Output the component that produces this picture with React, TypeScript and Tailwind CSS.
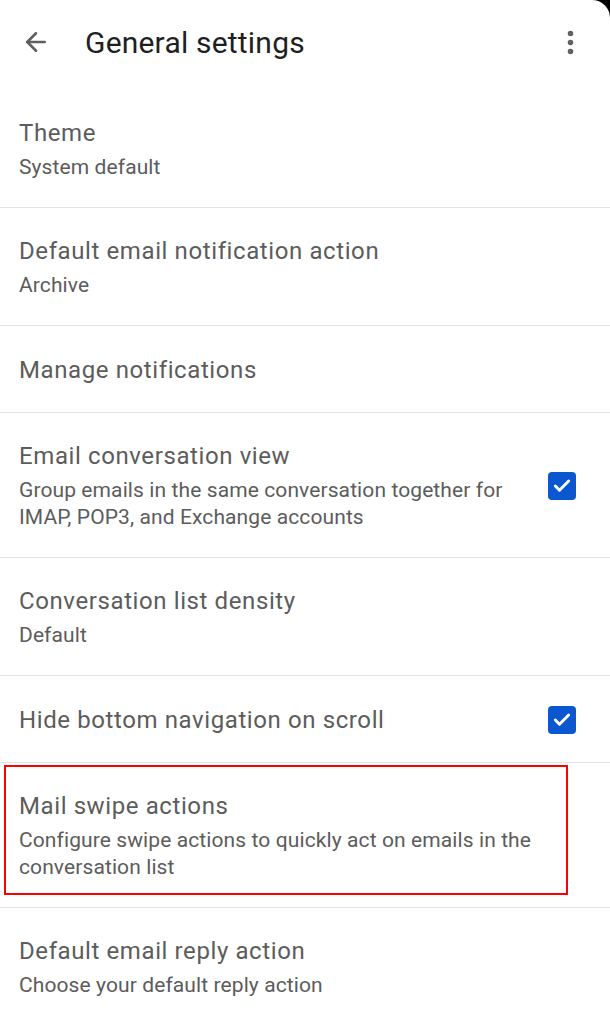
import { ArrowLeft, EllipsisVertical, Check } from 'lucide-react'

interface SettingRow {
  title: string
  lines?: string[]
  checked?: boolean
  highlight?: boolean
}

const ROWS: SettingRow[] = [
  { title: 'Theme', lines: ['System default'] },
  { title: 'Default email notification action', lines: ['Archive'] },
  { title: 'Manage notifications' },
  {
    title: 'Email conversation view',
    lines: ['Group emails in the same conversation together for', 'IMAP, POP3, and Exchange accounts'],
    checked: true,
  },
  { title: 'Conversation list density', lines: ['Default'] },
  { title: 'Hide bottom navigation on scroll', checked: true },
  {
    title: 'Mail swipe actions',
    lines: ['Configure swipe actions to quickly act on emails in the', 'conversation list'],
    highlight: true,
  },
  { title: 'Default email reply action', lines: ['Choose your default reply action'] },
]

function Row({ row, last }: { row: SettingRow; last: boolean }) {
  const single = !row.lines
  return (
    <div
      className={`relative flex items-center pl-[19px] pr-[34px] ${
        single ? 'pt-[29px] pb-[27px]' : 'pt-[28px] pb-[26px]'
      } ${last ? '' : 'border-b border-[#e3e3e3]'}`}
    >
      <div className="flex-1 flex flex-col gap-[6px]">
        <div className="text-[24px] leading-[30px] tracking-[0.6px] text-[#5c5c5c]">{row.title}</div>
        {row.lines && (
          <div className="text-[21px] leading-[27px] tracking-[0.1px] text-[#5c5c5c]">
            {row.lines.map((l, i) => (
              <div key={i} className="whitespace-nowrap">{l}</div>
            ))}
          </div>
        )}
      </div>
      {row.checked && (
        <div className="w-[28px] h-[28px] rounded-[4px] bg-[#0b57d0] flex items-center justify-center">
          <Check size={20} strokeWidth={3.5} className="text-white" />
        </div>
      )}
      {row.highlight && (
        <div className="absolute left-[4px] top-[2px] w-[564px] h-[130px] border-2 border-[#ff0000] pointer-events-none" />
      )}
    </div>
  )
}

export default function App() {
  return (
    <div className="relative w-[610px] h-[1024px] bg-white overflow-hidden font-['Roboto',sans-serif]">
      {/* screen corner */}
      <div className="absolute top-0 right-0 w-[18px] h-[18px] overflow-hidden">
        <div className="absolute top-0 right-0 w-[36px] h-[36px] rounded-full shadow-[0_0_0_20px_#000]" />
      </div>

      {/* Header */}
      <div className="h-[90px] flex items-start">
        <div className="h-[84px] w-full flex items-center pl-[21px] pr-[24px]">
          <ArrowLeft size={30} strokeWidth={2} className="text-[#5f5f5f]" />
          <div className="ml-[34px] flex-1 text-[30px] tracking-[0.2px] text-[#1f1f1f]">General settings</div>
          <EllipsisVertical size={31} strokeWidth={2.3} className="text-[#5f5f5f]" />
        </div>
      </div>

      {ROWS.map((row, i) => (
        <Row key={row.title} row={row} last={i === ROWS.length - 1} />
      ))}
    </div>
  )
}
